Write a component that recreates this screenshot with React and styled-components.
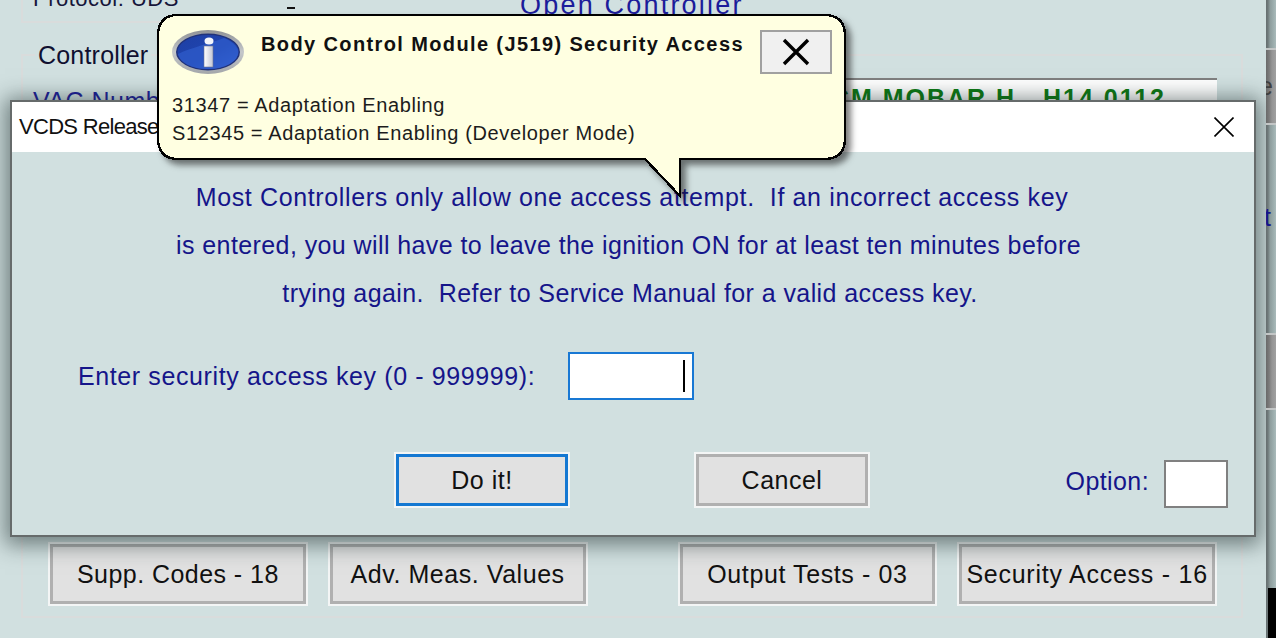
import React from "react";
import styled, { createGlobalStyle } from "styled-components";

const Global = createGlobalStyle`
  html, body { margin: 0; padding: 0; background: #d1e0e0; }
  body { font-family: "Liberation Sans", Arial, sans-serif; }
`;

const Page = styled.div`
  position: relative;
  width: 1276px;
  height: 638px;
  overflow: hidden;
  display: flex;
  background: #d1e0e0;
`;

const Main = styled.div`
  width: 1266px;
  flex: none;
  display: flex;
  flex-direction: column;
  height: 638px;
`;

const TopBox = styled.div`
  height: 23px;
  margin-left: 21px;
  width: 140px;
  flex: none;
  border-left: 2px solid #d9dcdc;
  border-bottom: 2px solid #d9dcdc;
  box-sizing: border-box;
`;

const TopRow = styled.div`
  display: flex;
  height: 23px;
  flex: none;
  overflow: hidden;
`;

const ProtocolText = styled.div`
  font-size: 22px;
  line-height: 24px;
  margin: -13px 0 0 10px;
  color: #16163a;
  white-space: pre;
  letter-spacing: 0.5px;
`;

const Dash = styled.div`
  width: 8px;
  height: 2px;
  background: #111;
  margin: 7px 0 0 126px;
`;

const OpenLink = styled.div`
  font-size: 27px;
  line-height: 30px;
  margin: -10px 0 0 225px;
  color: #1c1c9a;
  letter-spacing: 2.2px;
  white-space: pre;
`;

const Group = styled.fieldset`
  margin: 17px 0 0 21px;
  padding: 0 24px 0 9px;
  width: 1222px;
  height: 578px;
  box-sizing: border-box;
  border: 2px solid #d9dcdc;
  min-width: 0;
`;

const Legend = styled.legend`
  font-size: 25px;
  line-height: 30px;
  padding: 0 3px;
  margin-left: 3px;
  color: #101030;
  letter-spacing: 0.2px;
`;

const GroupBody = styled.div`
  height: 536px;
  display: flex;
  flex-direction: column;
`;

const VacRow = styled.div`
  display: flex;
  align-items: flex-start;
  margin-top: 8px;
`;

const VacLabel = styled.div`
  font-size: 25px;
  line-height: 30px;
  margin: 8px 0 0 1px;
  width: 190px;
  color: #1c1c9a;
  letter-spacing: 0.5px;
  white-space: pre;
`;

const VacField = styled.div`
  flex: 1;
  height: 44px;
  box-sizing: border-box;
  border-top: 2px solid #808080;
  background: #fff;
  display: flex;
  justify-content: flex-end;
  padding-right: 51px;
`;

const VacValue = styled.div`
  font-size: 25px;
  font-weight: 700;
  line-height: 36px;
  color: #0b7a12;
  letter-spacing: 2px;
  white-space: pre;
`;

const BottomButtons = styled.div`
  margin-top: auto;
  display: flex;
  gap: 20px;
  padding-left: 16px;
`;

const Btn = styled.div`
  box-sizing: border-box;
  width: ${(p) => p.$w}px;
  height: ${(p) => p.$h}px;
  border: 2px solid #f3f5f5;
  background: #e1e1e1;
  box-shadow: inset 0 0 0 3px ${(p) => p.$edge || "#b0b0b0"};
  display: flex;
  align-items: center;
  justify-content: center;
  font-size: 25px;
  color: #111;
  letter-spacing: ${(p) => p.$ls || 0}px;
  white-space: pre;
  margin-left: ${(p) => p.$ml || 0}px;
`;

const Strip = styled.div`
  position: relative;
  z-index: 5;
  width: 10px;
  flex: none;
  height: 638px;
  display: flex;
  flex-direction: column;
  overflow: hidden;
  background: linear-gradient(to right, #666e6f 0, #6f7a7b 20%, #8d9c9c 40%, #9aabab 70%, #a9baba 100%);
`;

const StripPlain = styled.div`
  height: ${(p) => p.$h}px;
  flex: none;
  overflow: hidden;
`;

const StripButton = styled.div`
  height: 77px;
  flex: none;
  box-sizing: border-box;
  border-top: 2px solid #c3c6c6;
  border-bottom: 2px solid #c3c6c6;
  background: linear-gradient(to right, #696969 0, #7a7a7a 30%, #949494 60%, #a0a0a0 100%);
  font-size: 25px;
  line-height: 73px;
  color: #3f3f3f;
  text-indent: -7px;
  overflow: hidden;
`;

const StripText = styled.div`
  font-size: 25px;
  line-height: 30px;
  margin-top: 77px;
  text-indent: -2px;
  color: #15158a;
`;

const StripBlack = styled.div`
  flex: 1;
  margin-left: 2px;
  background: #000;
`;

const Dialog = styled.div`
  position: absolute;
  left: 10px;
  top: 100px;
  width: 1246px;
  height: 437px;
  box-sizing: border-box;
  border: 2px solid #666b6b;
  background: #d1e0e0;
  box-shadow: 0 3px 20px 5px rgba(30, 45, 45, 0.55);
  display: flex;
  flex-direction: column;
  z-index: 2;
`;

const TitleBar = styled.div`
  height: 50px;
  flex: none;
  background: #fff;
  display: flex;
  align-items: center;
  justify-content: space-between;
  padding: 0 20px 0 7px;
  font-size: 22px;
  color: #111;
  letter-spacing: -0.7px;
  white-space: pre;
`;

const Message = styled.div`
  padding: 21px 6px 0 0;
  text-align: center;
  font-size: 25px;
  line-height: 48px;
  color: #15158a;
  white-space: pre;
`;

const MessageLine = styled.div`
  letter-spacing: ${(p) => p.$ls}px;
  padding-left: ${(p) => p.$shift || 0}px;
  padding-right: ${(p) => p.$shiftLeft || 0}px;
`;

const KeyRow = styled.div`
  display: flex;
  align-items: center;
  margin-top: 35px;
  padding-left: 66px;
`;

const KeyLabel = styled.div`
  width: 490px;
  font-size: 25px;
  color: #15158a;
  letter-spacing: 0.61px;
  white-space: pre;
`;

const KeyInput = styled.div`
  width: 126px;
  height: 48px;
  box-sizing: border-box;
  border: 2px solid #1878d4;
  background: #fff;
  display: flex;
  justify-content: flex-end;
  align-items: center;
  padding-right: 7px;
`;

const Caret = styled.div`
  width: 2px;
  height: 32px;
  background: #000;
`;

const Actions = styled.div`
  display: flex;
  align-items: flex-end;
  margin-top: 52px;
  padding: 0 26px 0 382px;
`;

const OptionWrap = styled.div`
  margin-left: auto;
  display: flex;
  align-items: center;
  gap: 15px;
`;

const OptionLabel = styled.div`
  font-size: 25px;
  color: #15158a;
  letter-spacing: 0.4px;
  margin-bottom: 6px;
`;

const OptionBox = styled.div`
  width: 64px;
  height: 48px;
  box-sizing: border-box;
  border: 2px solid #808080;
  background: #fff;
`;

const Balloon = styled.div`
  position: absolute;
  left: 157px;
  top: 14px;
  width: 689px;
  height: 146px;
  z-index: 3;
`;

const BalloonShape = styled.svg`
  position: absolute;
  left: 0;
  top: 0;
  overflow: visible;
  filter: drop-shadow(5px 5px 3px rgba(20, 20, 20, 0.55));
`;

const BalloonBody = styled.div`
  position: relative;
  padding: 16px 14px 0 15px;
  display: flex;
  flex-direction: column;
`;

const BalloonHead = styled.div`
  display: flex;
  align-items: flex-start;
`;

const BalloonTitle = styled.div`
  margin: 2px 0 0 17px;
  font-size: 20px;
  line-height: 24px;
  font-weight: 700;
  color: #111;
  letter-spacing: 1.38px;
  white-space: pre;
`;

const BalloonClose = styled.div`
  margin-left: auto;
  width: 72px;
  height: 44px;
  box-sizing: border-box;
  border: 2px solid #a0a0a0;
  background: #f0f0f0;
  display: flex;
  align-items: center;
  justify-content: center;
`;

const BalloonLines = styled.div`
  margin-top: 17px;
  font-size: 20px;
  line-height: 28px;
  color: #1c1c1c;
  letter-spacing: 0.62px;
  white-space: pre;
`;

const InfoIcon = () => (
  <svg width="72" height="44" viewBox="0 0 72 44" style={{ flex: "none" }}>
    <defs>
      <linearGradient id="ring" x1="0" y1="0" x2="0" y2="1">
        <stop offset="0" stopColor="#8f9296" />
        <stop offset="0.5" stopColor="#c4c7ca" />
        <stop offset="1" stopColor="#a3a6aa" />
      </linearGradient>
      <linearGradient id="blue" x1="0" y1="0" x2="1" y2="1">
        <stop offset="0" stopColor="#1e3fa4" />
        <stop offset="0.55" stopColor="#1f45b0" />
        <stop offset="1" stopColor="#3a6ae0" />
      </linearGradient>
      <linearGradient id="stem" x1="0" y1="0" x2="1" y2="0">
        <stop offset="0" stopColor="#ffffff" />
        <stop offset="1" stopColor="#c2c6d4" />
      </linearGradient>
    </defs>
    <ellipse cx="36" cy="22" rx="36" ry="22" fill="url(#ring)" />
    <ellipse cx="36" cy="22" rx="32" ry="18.5" fill="#20327a" />
    <ellipse cx="36" cy="22" rx="30.5" ry="17" fill="url(#blue)" />
    <path d="M6 24 C 18 18, 36 14, 52 8 C 60 11, 66 17, 66 22 C 66 32, 52 39, 36 39 C 20 39, 8 33, 6 24 Z" fill="#2f5ccc" opacity="0.7" />
    <ellipse cx="37" cy="11" rx="4.5" ry="3.5" fill="#f4f6fb" />
    <rect x="32" y="16" width="9" height="21" fill="url(#stem)" stroke="#6b7390" strokeWidth="0.6" />
  </svg>
);

const BigX = () => (
  <svg width="28" height="28" viewBox="0 0 28 28">
    <path d="M2 2 L26 26 M26 2 L2 26" stroke="#000" strokeWidth="3.4" fill="none" />
  </svg>
);

const ThinX = () => (
  <svg width="20" height="20" viewBox="0 0 20 20">
    <path d="M0.5 0.5 L19.5 19.5 M19.5 0.5 L0.5 19.5" stroke="#000" strokeWidth="1.6" fill="none" />
  </svg>
);

export default function App() {
  return (
    <>
      <Global />
      <Page>
        <Main>
          <TopRow>
            <TopBox>
              <ProtocolText>Protocol: UDS</ProtocolText>
            </TopBox>
            <Dash />
            <OpenLink>Open Controller</OpenLink>
          </TopRow>
          <Group>
            <Legend>Controller</Legend>
            <GroupBody>
              <VacRow>
                <VacLabel>VAC Number</VacLabel>
                <VacField>
                  <VacValue>BCM MOBAR H   H14 0112</VacValue>
                </VacField>
              </VacRow>
              <BottomButtons>
                <Btn $w={260} $h={64} $ls={0.45}>Supp. Codes - 18</Btn>
                <Btn $w={260} $h={64} $ls={0.55}>Adv. Meas. Values</Btn>
                <Btn $w={260} $h={64} $ls={0.6} $ml={70}>Output Tests - 03</Btn>
                <Btn $w={260} $h={64} $ls={0.75}>Security Access - 16</Btn>
              </BottomButtons>
            </GroupBody>
          </Group>
        </Main>
        <Strip>
          <StripPlain $h={48} />
          <StripButton>e</StripButton>
          <StripPlain $h={208}>
            <StripText>t</StripText>
          </StripPlain>
          <StripButton />
          <StripPlain $h={178} />
          <StripBlack />
        </Strip>

        <Dialog>
          <TitleBar>
            <span>VCDS Release 17.1.3</span>
            <ThinX />
          </TitleBar>
          <Message>
            <MessageLine $ls={0.63} $shift={4}>Most Controllers only allow one access attempt.  If an incorrect access key</MessageLine>
            <MessageLine $ls={0.41} $shiftLeft={3}>is entered, you will have to leave the ignition ON for at least ten minutes before</MessageLine>
            <MessageLine $ls={0.42}>trying again.  Refer to Service Manual for a valid access key.</MessageLine>
          </Message>
          <KeyRow>
            <KeyLabel>Enter security access key (0 - 999999):</KeyLabel>
            <KeyInput>
              <Caret />
            </KeyInput>
          </KeyRow>
          <Actions>
            <Btn $w={176} $h={56} $edge="#1478d2" $ls={0.5}>Do it!</Btn>
            <Btn $w={176} $h={56} $ml={124} $ls={0.5}>Cancel</Btn>
            <OptionWrap>
              <OptionLabel>Option:</OptionLabel>
              <OptionBox />
            </OptionWrap>
          </Actions>
        </Dialog>

        <Balloon>
          <BalloonShape width="689" height="183" viewBox="0 0 689 183" shapeRendering="crispEdges">
            <path
              d="M21 1 H667 Q688 1 688 22 V124 Q688 145 667 145 H523 V182 L488 145 H21 Q1 145 1 124 V22 Q1 1 21 1 Z"
              fill="#ffffe1"
              stroke="#000"
              strokeWidth="2.4"
            />
          </BalloonShape>
          <BalloonBody>
            <BalloonHead>
              <InfoIcon />
              <BalloonTitle>Body Control Module (J519) Security Access</BalloonTitle>
              <BalloonClose>
                <BigX />
              </BalloonClose>
            </BalloonHead>
            <BalloonLines>
              {"31347 = Adaptation Enabling\n"}
              {"S12345 = Adaptation Enabling (Developer Mode)"}
            </BalloonLines>
          </BalloonBody>
        </Balloon>
      </Page>
    </>
  );
}
